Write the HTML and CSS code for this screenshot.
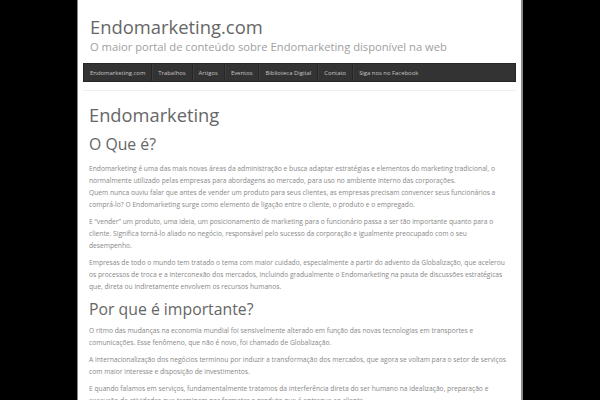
FILE: index.html
```html
<!DOCTYPE html>
<html lang="pt">
<head>
<meta charset="utf-8">
<title>Endomarketing.com</title>
<link rel="stylesheet" href="styles.css">
</head>
<body>
<div class="page">
  <header class="site-header">
    <div class="site-title">Endomarketing.com</div>
    <div class="site-desc">O maior portal de conteúdo sobre Endomarketing disponível na web</div>
  </header>
  <nav class="nav">
    <a class="nav-item">Endomarketing.com</a>
    <a class="nav-item">Trabalhos</a>
    <a class="nav-item">Artigos</a>
    <a class="nav-item">Eventos</a>
    <a class="nav-item">Biblioteca Digital</a>
    <a class="nav-item">Contato</a>
    <a class="nav-item last">Siga nos no Facebook</a>
  </nav>
  <main class="content">
    <h1 class="page-title">Endomarketing</h1>
    <h2 class="section-title first">O Que é?</h2>
    <p>Endomarketing é uma das mais novas áreas da administração e busca adaptar estratégias e elementos do marketing tradicional, o normalmente utilizado pelas empresas para abordagens ao mercado, para uso no ambiente interno das corporações.<br>Quem nunca ouviu falar que antes de vender um produto para seus clientes, as empresas precisam convencer seus funcionários a comprá-lo? O Endomarketing surge como elemento de ligação entre o cliente, o produto e o empregado.</p>
    <p>E “vender” um produto, uma ideia, um posicionamento de marketing para o funcionário passa a ser tão importante quanto para o cliente. Significa torná-lo aliado no negócio, responsável pelo sucesso da corporação e igualmente preocupado com o seu desempenho.</p>
    <p>Empresas de todo o mundo tem tratado o tema com maior cuidado, especialmente a partir do advento da Globalização, que acelerou os processos de troca e a interconexão dos mercados, incluindo gradualmente o Endomarketing na pauta de discussões estratégicas que, direta ou indiretamente envolvem os recursos humanos.</p>
    <h2 class="section-title">Por que é importante?</h2>
    <p>O ritmo das mudanças na economia mundial foi sensivelmente alterado em função das novas tecnologias em transportes e comunicações. Esse fenômeno, que não é novo, foi chamado de Globalização.</p>
    <p>A internacionalização dos negócios terminou por induzir a transformação dos mercados, que agora se voltam para o setor de serviços com maior interesse e disposição de investimentos.</p>
    <p>E quando falamos em serviços, fundamentalmente tratamos da interferência direta do ser humano na idealização, preparação e execução de atividades que terminam por formatar o produto que é entregue ao cliente.</p>
  </main>
</div>
</body>
</html>
```

FILE: styles.css
```css
html, body {
  margin: 0;
  padding: 0;
  background: #000;
  height: 100%;
  overflow: hidden;
}
body {
  font-family: "Open Sans", "Liberation Sans", sans-serif;
}
.page {
  margin-left: 77px;
  width: 446px;
  box-sizing: border-box;
  min-height: 400px;
  background: #fff;
  border-left: 1px solid #8a8a8a;
  border-right: 2px solid #8a8a8a;
  padding: 0 5px;
}
.site-header {
  padding: 15px 7px 0;
}
.site-title {
  font-size: 18.4px;
  line-height: 24px;
  color: #666;
}
.site-desc {
  font-size: 11.2px;
  line-height: 16px;
  color: #a0a0a0;
}
.nav {
  display: flex;
  margin-top: 8px;
  height: 19px;
  background: #333;
  border: 1px solid #262626;
  box-sizing: border-box;
  align-items: stretch;
}
.nav-item {
  display: flex;
  align-items: center;
  padding: 0 6px;
  font-size: 5.9px;
  color: #c4c4c4;
  border-right: 1px solid #262626;
  box-shadow: 1px 0 0 #3e3e3e;
}
.nav-item.last {
  border-right: none;
  box-shadow: none;
}
.content {
  margin-top: 8px;
  border-top: 1px solid #eee;
  padding: 0 6px;
  color: #888;
}
.page-title {
  margin: 0;
  padding-top: 12px;
  font-size: 18.3px;
  line-height: 24px;
  font-weight: normal;
  color: #666;
}
.section-title {
  margin: 0 0 5px;
  font-size: 15.8px;
  line-height: 22px;
  font-weight: normal;
  color: #666;
}
.section-title.first {
  margin-top: 6px;
  margin-bottom: 8px;
}
.content p {
  margin: 0 0 5px;
  font-size: 6.7px;
  line-height: 12px;
}
```
